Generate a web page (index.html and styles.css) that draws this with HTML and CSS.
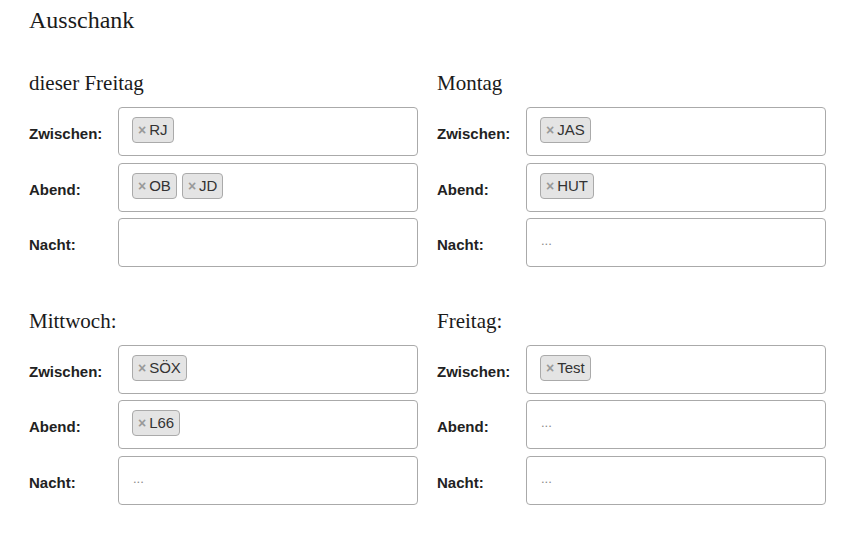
FILE: index.html
```html
<!DOCTYPE html>
<html lang="de">
<head>
<meta charset="utf-8">
<title>Ausschank</title>
<link rel="stylesheet" href="styles.css">
</head>
<body>
<div class="page">
  <h1 class="title">Ausschank</h1>
  <div class="grid">
    <section class="day">
      <h2 class="day-title">dieser Freitag</h2>
      <div class="rows">
        <div class="row"><span class="label">Zwischen:</span><div class="box"><span class="chip"><span class="x">×</span>RJ</span></div></div>
        <div class="row"><span class="label">Abend:</span><div class="box"><span class="chip"><span class="x">×</span>OB</span><span class="chip"><span class="x">×</span>JD</span></div></div>
        <div class="row"><span class="label">Nacht:</span><div class="box"></div></div>
      </div>
    </section>
    <section class="day">
      <h2 class="day-title">Montag</h2>
      <div class="rows">
        <div class="row"><span class="label">Zwischen:</span><div class="box"><span class="chip"><span class="x">×</span>JAS</span></div></div>
        <div class="row"><span class="label">Abend:</span><div class="box"><span class="chip"><span class="x">×</span>HUT</span></div></div>
        <div class="row"><span class="label">Nacht:</span><div class="box"><span class="ph">...</span></div></div>
      </div>
    </section>
    <section class="day">
      <h2 class="day-title">Mittwoch:</h2>
      <div class="rows">
        <div class="row"><span class="label">Zwischen:</span><div class="box"><span class="chip"><span class="x">×</span>SÖX</span></div></div>
        <div class="row"><span class="label">Abend:</span><div class="box"><span class="chip"><span class="x">×</span>L66</span></div></div>
        <div class="row"><span class="label">Nacht:</span><div class="box"><span class="ph">...</span></div></div>
      </div>
    </section>
    <section class="day">
      <h2 class="day-title">Freitag:</h2>
      <div class="rows">
        <div class="row"><span class="label">Zwischen:</span><div class="box"><span class="chip"><span class="x">×</span>Test</span></div></div>
        <div class="row"><span class="label">Abend:</span><div class="box"><span class="ph">...</span></div></div>
        <div class="row"><span class="label">Nacht:</span><div class="box"><span class="ph">...</span></div></div>
      </div>
    </section>
  </div>
</div>
</body>
</html>
```
FILE: styles.css
```css
html, body {
  margin: 0;
  padding: 0;
  background: #fff;
}
body {
  color: #222;
  font-family: "Liberation Sans", Arial, sans-serif;
}
.page {
  padding: 6px 0 0 29px;
}
.title {
  margin: 0;
  font-family: "Liberation Serif", "Times New Roman", serif;
  font-weight: normal;
  font-size: 24px;
  line-height: 28px;
  color: #1a1a1a;
}
.grid {
  margin-top: 37px;
  display: grid;
  grid-template-columns: 388px 388px;
  column-gap: 20px;
  row-gap: 41.5px;
}
.day-title {
  margin: 0 0 12px 0;
  font-family: "Liberation Serif", "Times New Roman", serif;
  font-weight: normal;
  font-size: 21px;
  line-height: 24px;
  color: #1a1a1a;
}
.rows {
  display: flex;
  flex-direction: column;
  gap: 6.5px;
}
.row {
  display: grid;
  grid-template-columns: 89px 300px;
  align-items: center;
}
.label {
  font-weight: bold;
  font-size: 15px;
  line-height: 18px;
  padding-top: 5px;
}
.box {
  box-sizing: border-box;
  height: 49px;
  border: 1px solid #aaa;
  border-radius: 4px;
  padding: 9px 13px;
  display: flex;
  align-items: flex-start;
  gap: 5px;
}
.chip {
  display: inline-block;
  background: #e4e4e4;
  border: 1px solid #aaa;
  border-radius: 4px;
  padding: 0 5px;
  font-size: 15px;
  line-height: 23px;
  color: #333;
}
.x {
  color: #999;
  font-weight: bold;
  margin-right: 3px;
  font-size: 14px;
}
.ph {
  color: #888;
  font-size: 13px;
  line-height: 25px;
  margin-left: 1px;
}
```
